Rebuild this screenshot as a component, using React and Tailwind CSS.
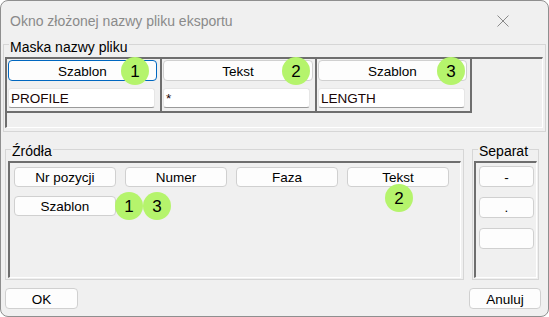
import React from "react";

const F = { fontFamily: '"Liberation Sans", Arial, sans-serif' };

function Badge({ n, className }) {
  return (
    <div
      className={`absolute w-[28px] h-[28px] rounded-full bg-[#b5f46c] flex items-center justify-center text-[17px] leading-none text-black ${className}`}
    >
      {n}
    </div>
  );
}

function Btn({ children, className = "", focused = false }) {
  return (
    <div
      className={`relative flex items-center justify-center pt-[2px] bg-[#fdfdfd] rounded-[4px] border text-[13.5px] leading-none text-black ${
        focused ? "border-[#0067c0]" : "border-[#d0d0d0]"
      } ${className}`}
    >
      {children}
    </div>
  );
}

function Input({ value }) {
  return (
    <div className="mt-[7px] w-[147px] h-[20px] bg-white border border-[#e6e6e6] border-b-[#9a9a9a] rounded-[3px] flex items-center pl-[2px] pt-[1px] text-[13.5px] leading-none text-[#1a0505]">
      {value}
    </div>
  );
}

export default function App() {
  return (
    <div className="w-[549px] h-[317px] bg-white" style={F}>
      <div className="w-[549px] h-[317px] bg-[#f0f0f0] border border-[#8f8f8f] rounded-[8px] overflow-hidden flex flex-col">
        {/* Title bar */}
        <div className="h-[40px] flex items-center pl-[9px] shrink-0">
          <span className="text-[14px] text-[#8a8a8a] leading-none">
            Okno złożonej nazwy pliku eksportu
          </span>
          <svg className="ml-auto mr-[39px]" width="12" height="12" viewBox="0 0 12 12">
            <path d="M0.5 0.5 L11.5 11.5 M11.5 0.5 L0.5 11.5" stroke="#8a8a8a" strokeWidth="1" fill="none" />
          </svg>
        </div>

        {/* Maska nazwy pliku */}
        <div className="relative ml-[2px] mt-[3px] w-[543px] h-[88px] border border-[#d6d6d6] shrink-0">
          <div className="absolute left-[5px] -top-[5px] px-[1px] bg-[#f0f0f0] text-[14px] leading-[14px] text-black">
            Maska nazwy pliku
          </div>
          <div className="ml-[1px] mt-[12px] w-[538px] h-[71px] border-t-2 border-l-2 border-[#6e6e6e] border-r border-b border-r-white border-b-white flex">
            <div className="w-[155px] h-[54px] border-r-2 border-b-2 border-[#6e6e6e] pl-[1px] pt-[1px]">
              <Btn focused className="w-[149px] h-[21px]">
                Szablon
                <Badge n="1" className="left-[112px] -top-[4px]" />
              </Btn>
              <Input value="PROFILE" />
            </div>
            <div className="w-[155px] h-[54px] border-r-2 border-b-2 border-[#6e6e6e] pl-[1px] pt-[1px]">
              <Btn className="w-[150px] h-[21px]">
                Tekst
                <Badge n="2" className="left-[118px] -top-[4px]" />
              </Btn>
              <Input value="*" />
            </div>
            <div className="w-[155px] h-[54px] border-r-2 border-b-2 border-[#6e6e6e] pl-[1px] pt-[1px]">
              <Btn className="w-[149px] h-[21px]">
                Szablon
                <Badge n="3" className="left-[118px] -top-[4px]" />
              </Btn>
              <Input value="LENGTH" />
            </div>
          </div>
        </div>

        {/* Źródła + Separat */}
        <div className="flex mt-[17px] shrink-0">
          <div className="relative ml-[4px] w-[459px] h-[131px] border border-[#d6d6d6]">
            <div className="absolute left-[5px] -top-[6px] px-[1px] bg-[#f0f0f0] text-[14px] leading-[14px] text-black">
              Źródła
            </div>
            <div className="ml-[2px] mt-[11px] w-[453px] h-[117px] border-t-2 border-l-2 border-[#6e6e6e] border-r border-b border-r-white border-b-white pl-[4px] pt-[4px]">
              <div className="grid grid-cols-[102px_102px_102px_102px] gap-[9px]">
                <Btn className="h-[20px]">Nr pozycji</Btn>
                <Btn className="h-[20px]">Numer</Btn>
                <Btn className="h-[20px]">Faza</Btn>
                <Btn className="h-[20px] z-10">
                  Tekst
                  <Badge n="2" className="left-[37px] top-[16px]" />
                </Btn>
                <Btn className="h-[20px]">
                  Szablon
                  <Badge n="1" className="left-[100px] -top-[5px]" />
                  <Badge n="3" className="left-[128px] -top-[5px]" />
                </Btn>
              </div>
            </div>
          </div>

          <div className="relative ml-[8px] w-[67px] h-[131px] border border-[#d6d6d6]">
            <div className="absolute left-[5px] -top-[6px] px-[1px] bg-[#f0f0f0] text-[14px] leading-[14px] text-black">
              Separat
            </div>
            <div className="ml-[1px] mt-[11px] w-[63px] h-[117px] border-t-2 border-l-2 border-[#6e6e6e] border-r border-b border-r-white border-b-white pl-[3px] pt-[3px] flex flex-col gap-[10px]">
              <Btn className="w-[55px] h-[21px]">-</Btn>
              <Btn className="w-[55px] h-[21px] items-end pb-[3px]">.</Btn>
              <Btn className="w-[55px] h-[21px]"></Btn>
            </div>
          </div>
        </div>

        {/* Bottom buttons */}
        <div className="flex justify-between mt-[8px] pl-[4px] pr-[7px] shrink-0">
          <Btn className="w-[73px] h-[21px]">OK</Btn>
          <Btn className="w-[72px] h-[21px]">Anuluj</Btn>
        </div>
      </div>
    </div>
  );
}
